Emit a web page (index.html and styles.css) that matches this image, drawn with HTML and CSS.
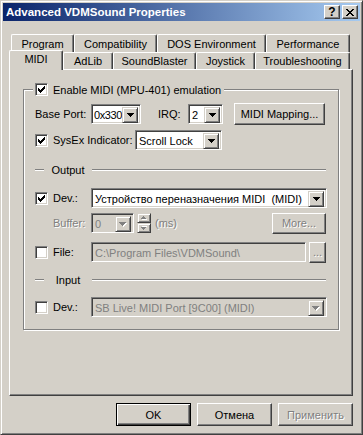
FILE: index.html
```html
<!DOCTYPE html>
<html lang="en">
<head>
  <meta charset="UTF-8">
  <meta name="viewport" content="width=device-width, initial-scale=1.0">
  <title>Advanced VDMSound Properties</title>
  <link rel="stylesheet" href="styles.css">
</head>
<body>
  <div class="window">
    <!-- caption -->
    <div class="titlebar">
      <span class="title">Advanced VDMSound Properties</span>
      <span class="cap-btn help">?</span>
      <span class="cap-btn close">
        <svg width="8" height="7" viewBox="0 0 8 7"><path d="M0 0h2v1H0zM6 0h2v1H6zM1 1h2v1H1zM5 1h2v1H5zM2 2h4v1H2zM3 3h2v1H3zM2 4h4v1H2zM1 5h2v1H1zM5 5h2v1H5zM0 6h2v1H0zM6 6h2v1H6z"/></svg>
      </span>
    </div>

    <div class="client">
      <!-- two rows of tabs -->
      <div class="tabs">
        <div class="tab-row back">
          <div class="tab t-program">Program</div>
          <div class="tab t-compat">Compatibility</div>
          <div class="tab t-dos">DOS Environment</div>
          <div class="tab t-perf">Performance</div>
        </div>
        <div class="tab-row front">
          <div class="tab t-midi selected">MIDI</div>
          <div class="tab t-adlib">AdLib</div>
          <div class="tab t-sb">SoundBlaster</div>
          <div class="tab t-joy">Joystick</div>
          <div class="tab t-trouble">Troubleshooting</div>
        </div>
      </div>

      <div class="panel">
        <div class="group">
          <div class="legend">
            <span class="check on"></span>
            <span>Enable MIDI (MPU-401) emulation</span>
          </div>

          <div class="row r-port">
            <span class="label l-port">Base Port:</span>
            <div class="combo w-port">
              <span class="value">0x330</span>
              <span class="drop"></span>
            </div>
            <span class="label l-irq">IRQ:</span>
            <div class="combo w-irq">
              <span class="value">2</span>
              <span class="drop"></span>
            </div>
            <div class="btn w-mapping">MIDI Mapping...</div>
          </div>

          <div class="row r-sysex">
            <span class="check on"></span>
            <span class="label l-sysex">SysEx Indicator:</span>
            <div class="combo w-sysex">
              <span class="value">Scroll Lock</span>
              <span class="drop"></span>
            </div>
          </div>

          <div class="sep s-output">
            <span class="etch short"></span>
            <span class="sep-text">Output</span>
            <span class="etch long"></span>
          </div>

          <div class="row r-dev">
            <span class="check on"></span>
            <span class="label l-dev">Dev.:</span>
            <div class="combo w-dev">
              <span class="value">Устройство переназначения MIDI&nbsp; (MIDI)</span>
              <span class="drop"></span>
            </div>
          </div>

          <div class="row r-buffer">
            <span class="label l-buffer disabled">Buffer:</span>
            <div class="combo w-buffer disabled">
              <span class="value">0</span>
              <span class="drop"></span>
            </div>
            <div class="spin disabled">
              <span class="spin-btn up"></span>
              <span class="spin-btn down"></span>
            </div>
            <span class="label l-ms disabled">(ms)</span>
            <div class="btn w-more disabled">More...</div>
          </div>

          <div class="row r-file">
            <span class="check"></span>
            <span class="label l-dev">File:</span>
            <div class="edit w-file disabled">C:\Program Files\VDMSound\</div>
            <div class="btn w-browse disabled">...</div>
          </div>

          <div class="sep s-input">
            <span class="etch short"></span>
            <span class="sep-text">Input</span>
            <span class="etch long"></span>
          </div>

          <div class="row r-input">
            <span class="check"></span>
            <span class="label l-dev">Dev.:</span>
            <div class="combo w-dev disabled">
              <span class="value">SB Live! MIDI Port [9C00] (MIDI)</span>
              <span class="drop"></span>
            </div>
          </div>
        </div>
      </div>

      <div class="footer">
        <div class="btn default">OK</div>
        <div class="btn">Отмена</div>
        <div class="btn disabled">Применить</div>
      </div>
    </div>
  </div>
</body>
</html>
```

FILE: styles.css
```css
* {
  box-sizing: border-box;
}
html, body {
  margin: 0;
}
body {
  background: #d4d0c8;
  color: #000;
  font-family: "Liberation Sans", Arial, sans-serif;
  font-size: 11px;
}
.window {
  width: 363px;
  height: 435px;
  padding: 2px;
  border: 1px solid;
  border-color: #d4d0c8 #404040 #404040 #d4d0c8;
  box-shadow: inset 1px 1px #fff, inset -1px -1px #808080;
  background: #d4d0c8;
  display: flex;
  flex-direction: column;
}

/* caption */
.titlebar {
  height: 18px;
  display: flex;
  align-items: center;
  padding: 0 2px 0 3px;
  background: linear-gradient(to right, #0a246a, #a6caf0);
}
.title {
  flex: 1;
  color: #fff;
  font-weight: bold;
  font-size: 11.5px;
  white-space: nowrap;
}
.cap-btn {
  width: 16px;
  height: 14px;
  display: flex;
  align-items: center;
  justify-content: center;
  background: #d4d0c8;
  border: 1px solid;
  border-color: #fff #404040 #404040 #fff;
  box-shadow: inset -1px -1px #808080;
  font-weight: bold;
  font-size: 12px;
}
.cap-btn.close {
  margin-left: 2px;
}

/* tabs */
.client {
  flex: 1;
  padding: 13px 7px 0 6px;
  display: flex;
  flex-direction: column;
}
.tab-row {
  display: flex;
  height: 18px;
}
.tab-row.back {
  padding-left: 2px;
}
.tab-row.front {
  height: 17px;
  align-items: flex-end;
}
.tab {
  height: 100%;
  display: flex;
  align-items: center;
  justify-content: center;
  background: #d4d0c8;
  border: 1px solid;
  border-bottom: none;
  border-color: #fff #404040 #404040 #fff;
  border-radius: 2px 2px 0 0;
  box-shadow: inset -1px 0 #808080;
  white-space: nowrap;
}
.tab.selected {
  position: relative;
  z-index: 1;
  height: 20px;
  margin-bottom: -1px;
  padding-bottom: 3px;
}
.t-program { width: 63px; }
.t-compat { width: 83px; }
.t-dos { width: 109px; }
.t-perf { width: 84px; }
.t-midi { width: 54px; }
.t-adlib { width: 50px; }
.t-sb { width: 83px; }
.t-joy { width: 59px; }
.t-trouble { width: 95px; }

/* page */
.panel {
  height: 327px;
  padding: 19px 13px 0 13px;
  border: 1px solid;
  border-color: #fff #404040 #404040 #fff;
  box-shadow: inset -1px -1px #808080;
}
.group {
  display: flex;
  flex-direction: column;
  padding: 0 10px 12px 11px;
  border: 1px solid #808080;
  box-shadow: inset 1px 1px #fff, 1px 1px #fff;
}
.legend {
  align-self: flex-start;
  display: flex;
  align-items: center;
  gap: 5px;
  height: 13px;
  margin: -7px 0 0 -2px;
  padding: 0 3px 0 2px;
  background: #d4d0c8;
}
.row {
  display: flex;
  align-items: center;
  height: 20px;
}
.r-port { margin-top: 8px; }
.r-sysex { margin-top: 6px; }
.s-output { margin-top: 13px; }
.r-dev { margin-top: 12px; }
.r-buffer { margin-top: 5px; }
.r-file { margin-top: 9px; }
.s-input { margin-top: 11px; }
.r-input { margin-top: 11px; }

.label {
  white-space: nowrap;
}
.l-port { width: 56px; }
.l-irq { width: 30px; margin-left: 17px; }
.l-sysex { width: 82px; margin-left: 5px; }
.l-dev { width: 38px; margin-left: 5px; }
.l-buffer { width: 38px; margin-left: 18px; }
.l-ms { margin-left: 4px; }

.disabled {
  color: #808080;
}
.label.disabled, .btn.disabled {
  text-shadow: 1px 1px 0 #fff;
}

/* check box */
.check {
  width: 13px;
  height: 13px;
  flex: none;
  background: #fff;
  border: 1px solid;
  border-color: #808080 #fff #fff #808080;
  box-shadow: inset 1px 1px #404040, inset -1px -1px #d4d0c8;
}
.check.on {
  background: #fff url("data:image/svg+xml,%3Csvg xmlns='http://www.w3.org/2000/svg' width='7' height='7'%3E%3Cpath d='M0 2h1v3H0zM1 3h1v3H1zM2 4h1v3H2zM3 3h1v3H3zM4 2h1v3H4zM5 1h1v3H5zM6 0h1v3H6z'/%3E%3C/svg%3E") no-repeat 2px 2px;
}

/* combo boxes and edits */
.combo, .edit {
  height: 20px;
  padding: 2px;
  background: #fff;
  border: 1px solid;
  border-color: #808080 #fff #fff #808080;
  box-shadow: inset 1px 1px #404040, inset -1px -1px #d4d0c8;
}
.combo {
  display: flex;
}
.combo .value {
  flex: 1;
  padding-left: 1px;
  line-height: 16px;
  white-space: nowrap;
  overflow: hidden;
}
.w-port .value {
  padding-left: 0;
  letter-spacing: -0.4px;
}
.drop, .spin-btn {
  display: flex;
  align-items: center;
  justify-content: center;
  background: #d4d0c8;
  border: 1px solid;
  border-color: #d4d0c8 #404040 #404040 #d4d0c8;
  box-shadow: inset 1px 1px #fff, inset -1px -1px #808080;
}
.drop {
  width: 16px;
  height: 16px;
  flex: none;
}
.drop::after {
  content: "";
  width: 7px;
  height: 4px;
  background: url("data:image/svg+xml,%3Csvg xmlns='http://www.w3.org/2000/svg' width='7' height='4'%3E%3Cpath d='M0 0h7v1H0zM1 1h5v1H1zM2 2h3v1H2zM3 3h1v1H3z'/%3E%3C/svg%3E");
}
.combo.disabled, .edit.disabled {
  background: #d4d0c8;
}
.disabled .drop::after {
  background: url("data:image/svg+xml,%3Csvg xmlns='http://www.w3.org/2000/svg' width='8' height='5'%3E%3Cpath fill='%23fff' d='M1 1h7v1H1zM2 2h5v1H2zM3 3h3v1H3zM4 4h1v1H4z'/%3E%3Cpath fill='%23808080' d='M0 0h7v1H0zM1 1h5v1H1zM2 2h3v1H2zM3 3h1v1H3z'/%3E%3C/svg%3E");
  width: 8px;
  height: 5px;
}
.w-port { width: 50px; }
.w-irq { width: 35px; }
.w-sysex { width: 87px; }
.w-dev { width: 236px; }
.w-buffer { width: 43px; }
.edit {
  padding-left: 3px;
  line-height: 16px;
  white-space: nowrap;
  overflow: hidden;
}
.w-file { width: 215px; }

/* spin */
.spin {
  display: flex;
  flex-direction: column;
  width: 14px;
  height: 20px;
  margin-left: 3px;
}
.spin-btn {
  height: 10px;
}
.spin-btn::after {
  content: "";
  width: 6px;
  height: 4px;
  background: url("data:image/svg+xml,%3Csvg xmlns='http://www.w3.org/2000/svg' width='6' height='4'%3E%3Cpath fill='%23fff' d='M2 1h1v1H2zM1 2h3v1H1zM0 3h6v1H0z' transform='translate(1 0)'/%3E%3Cpath fill='%23808080' d='M2 0h1v1H2zM1 1h3v1H1zM0 2h5v1H0z'/%3E%3C/svg%3E");
}
.spin-btn.down::after {
  transform: scaleY(-1);
}

/* separators */
.sep {
  display: flex;
  align-items: center;
  height: 13px;
}
.etch {
  height: 2px;
  border-top: 1px solid #808080;
  border-bottom: 1px solid #fff;
}
.etch.short {
  width: 9px;
}
.etch.long {
  flex: 1;
  margin-right: 2px;
}
.sep-text {
  width: 48px;
  text-align: center;
}

/* push buttons */
.btn {
  display: flex;
  align-items: center;
  justify-content: center;
  height: 23px;
  background: #d4d0c8;
  border: 1px solid;
  border-color: #fff #404040 #404040 #fff;
  box-shadow: inset -1px -1px #808080;
  white-space: nowrap;
}
.btn.default {
  border-color: #000;
  box-shadow: inset 1px 1px #fff, inset -1px -1px #404040, inset -2px -2px #808080;
}
.w-mapping {
  width: 91px;
  height: 22px;
  margin-left: 11px;
}
.w-more {
  width: 54px;
  height: 21px;
  margin-left: auto;
  margin-right: 2px;
}
.w-browse {
  width: 17px;
  height: 21px;
  margin-left: 3px;
  align-items: flex-end;
  padding-bottom: 4px;
}
.footer {
  display: flex;
  justify-content: flex-end;
  gap: 6px;
  margin-top: 7px;
}
.footer .btn {
  width: 75px;
}
```
